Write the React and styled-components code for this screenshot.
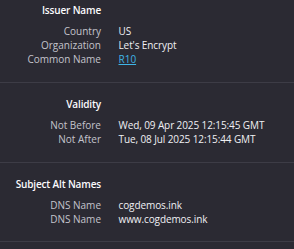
import React from 'react'
import styled, { createGlobalStyle } from 'styled-components'

const Global = createGlobalStyle`
  html, body {
    margin: 0;
    padding: 0;
    background: #2b2a33;
  }
  body {
    font-family: "Open Sans", "Noto Sans", sans-serif;
    font-size: 10px;
    color: #fbfbfe;
  }
`

const sections = [
  {
    title: 'Issuer Name',
    rows: [
      { label: 'Country', value: 'US' },
      { label: 'Organization', value: "Let's Encrypt" },
      { label: 'Common Name', value: 'R10', link: true },
    ],
  },
  {
    title: 'Validity',
    rows: [
      { label: 'Not Before', value: 'Wed, 09 Apr 2025 12:15:45 GMT' },
      { label: 'Not After', value: 'Tue, 08 Jul 2025 12:15:44 GMT' },
    ],
  },
  {
    title: 'Subject Alt Names',
    rows: [
      { label: 'DNS Name', value: 'cogdemos.ink' },
      { label: 'DNS Name', value: 'www.cogdemos.ink' },
    ],
  },
]

const App = () => {
  return (
    <Page>
      <Global />
      {sections.map((section, i) => (
        <Section key={section.title} first={i === 0}>
          <Heading>{section.title}</Heading>
          <Rows>
            {section.rows.map((row, j) => (
              <React.Fragment key={j}>
                <Label>{row.label}</Label>
                {row.link ? <Link href="#">{row.value}</Link> : <Value>{row.value}</Value>}
              </React.Fragment>
            ))}
          </Rows>
        </Section>
      ))}
    </Page>
  )
}
export default App

const Page = styled.div`
  display: flex;
  flex-direction: column;
  width: 294px;
`

const Section = styled.section`
  display: flex;
  flex-direction: column;
  padding: ${(p) => (p.first ? '3px' : '14.5px')} 0 15px;
  border-bottom: 1px solid #3d3c46;
`

const Heading = styled.div`
  width: 101px;
  text-align: right;
  font-weight: 600;
  letter-spacing: -0.15px;
  line-height: 14px;
  color: #fbfbfe;
  white-space: nowrap;
  margin-bottom: 7px;
`

const Rows = styled.div`
  display: grid;
  grid-template-columns: 101px 1fr;
  column-gap: 17.5px;
  line-height: 14.2px;
`

const Label = styled.div`
  text-align: right;
  color: #c4c4cc;
  white-space: nowrap;
`

const Value = styled.div`
  color: #f0f0f4;
  white-space: nowrap;
  letter-spacing: -0.1px;
`

const Link = styled.a`
  justify-self: start;
  color: #3fb4e6;
  text-decoration: underline;
`
